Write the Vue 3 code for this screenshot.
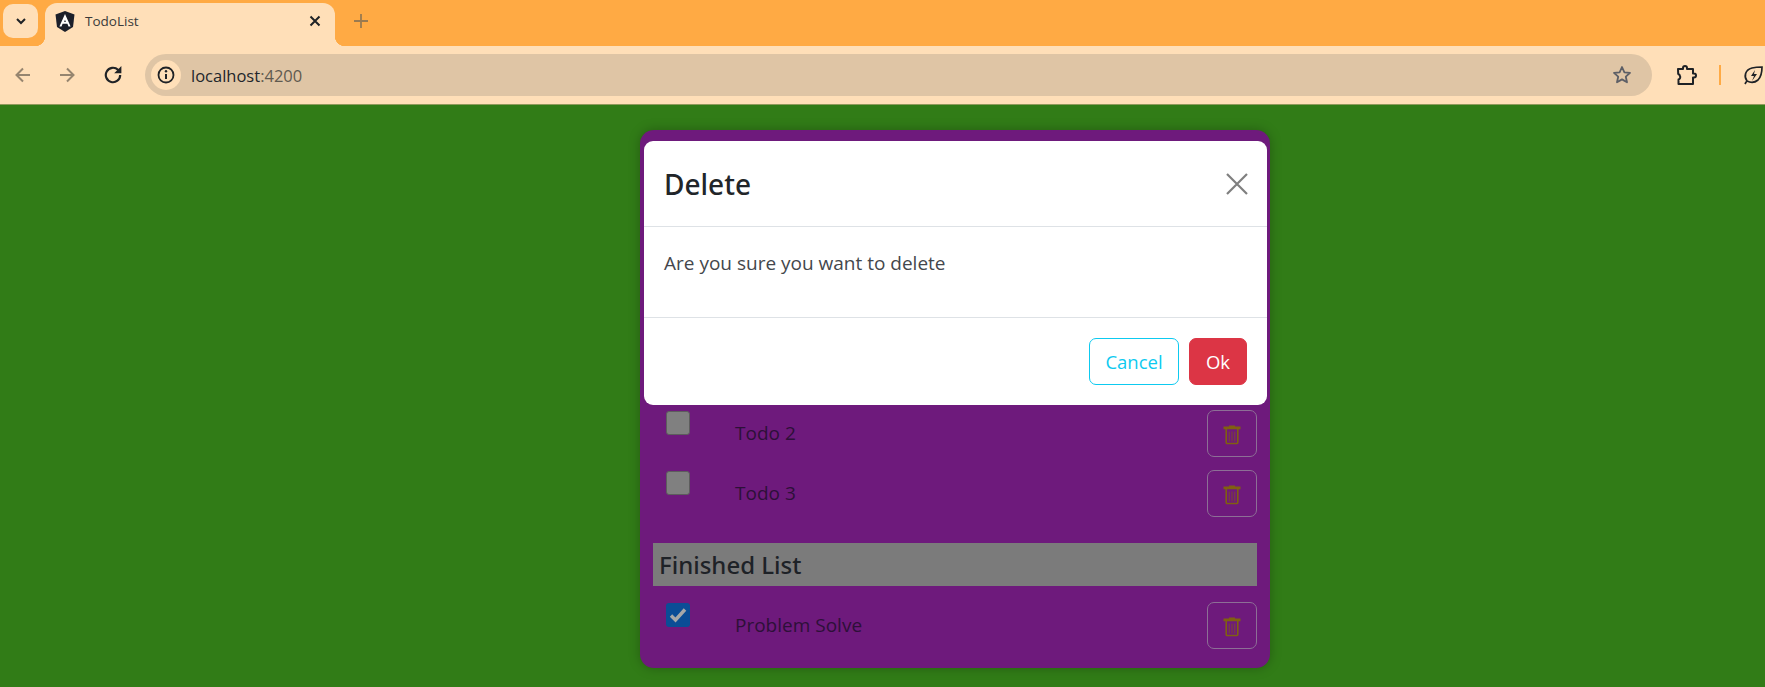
<template>
  <div class="page">
    <!-- 浏览器顶部 -->
    <header class="chrome">
      <div class="tabstrip">
        <button class="tab-search">
          <svg width="14" height="14" viewBox="0 0 14 14" fill="none"><path d="M3 5l4 4 4-4" stroke="#1f2226" stroke-width="2"/></svg>
        </button>
        <div class="tab">
          <svg class="favicon" width="20" height="21" viewBox="0 0 20 21">
            <path d="M10 0L0.500 3.400 2 16l8 5 8-5 1.500-12.600z" fill="#1b1f2a"/>
            <path d="M10 3L4.400 15.500h2.100l1.100-2.800h4.800l1.100 2.800h2.100zM9.100 11l.9-2.300.9 2.300z" fill="#fff" fill-rule="evenodd"/>
          </svg>
          <span class="tab-title">TodoList</span>
          <svg class="tab-close" width="12" height="12" viewBox="0 0 12 12"><path d="M1.500 1.500l9 9M10.500 1.500l-9 9" stroke="#1f2226" stroke-width="2"/></svg>
        </div>
        <svg class="new-tab" width="16" height="16" viewBox="0 0 16 16"><path d="M8 1v14M1 8h14" stroke="#9a7a50" stroke-width="1.800"/></svg>
      </div>
      <div class="toolbar">
        <svg class="nav" width="18" height="18" viewBox="0 0 18 18" fill="none"><path d="M16 9H3M9 2.500L2.500 9 9 15.500" stroke="#96856f" stroke-width="2"/></svg>
        <svg class="nav" width="18" height="18" viewBox="0 0 18 18" fill="none"><path d="M2 9h13M9 2.500L15.500 9 9 15.500" stroke="#96856f" stroke-width="2"/></svg>
        <svg class="nav" width="18" height="18" viewBox="1.500 1.500 15 15" fill="none"><path d="M15 9a6 6 0 1 1-1.800-4.300L15 6.500" stroke="#1f2226" stroke-width="1.800"/><path d="M16 1.500V7.500H10z" fill="#1f2226"/></svg>
        <div class="omnibox">
          <span class="site-info">
            <svg width="18" height="18" viewBox="0 0 18 18" fill="none"><circle cx="9" cy="9" r="7.500" stroke="#1f2226" stroke-width="1.800"/><path d="M9 8v5" stroke="#1f2226" stroke-width="2"/><circle cx="9" cy="5.300" r="1.200" fill="#1f2226"/></svg>
          </span>
          <span class="url">localhost<span class="port">:4200</span></span>
          <svg class="star" width="20" height="20" viewBox="0 0 20 20" fill="none"><path d="M10 2l2.400 5.300 5.600.6-4.200 3.800 1.200 5.600L10 14.400l-5 2.900 1.200-5.600L2 7.900l5.600-.6z" stroke="#5d5f66" stroke-width="1.800" stroke-linejoin="round"/></svg>
        </div>
        <svg class="ext" width="21" height="21" viewBox="0 0 21 21" fill="none"><path d="M2 4h5V3a2 2 0 0 1 4 0v1h6v4.500h1a2 2 0 0 1 0 4h-1V19H2.500v-4.500a2.500 2.500 0 0 0 1.500-3.500 2.500 2.500 0 0 0-1.800-2z" stroke="#1f2226" stroke-width="2" stroke-linejoin="round"/></svg>
        <span class="divider"></span>
        <svg class="leaf" width="22" height="21" viewBox="0 0 22 21" fill="none"><path d="M3 19c1-2 1.500-2.500 2-3C2 12 2.500 5 10 3c4-1 8-1 10-1 0 5-1 10-4 13-3 2.500-7 3-11 1" stroke="#1f2226" stroke-width="1.700"/><path d="M13 5l-4 6h3l-2 5 5-7h-3z" fill="#1f2226"/></svg>
      </div>
    </header>

    <!-- 页面内容 -->
    <main class="content">
      <section class="card">
        <div class="list pending">
          <div v-for="todo in pending" :key="todo" class="row">
            <span class="check"></span>
            <span class="label">{{ todo }}</span>
            <button class="trash">
              <svg width="18" height="20" viewBox="0 0 18 20" fill="none">
                <path d="M6 1.500V.5h6v1h5.500v2.800H.5V1.500z" fill="#806010"/>
                <path d="M3.200 4v13.500a1 1 0 0 0 1 1h9.600a1 1 0 0 0 1-1V4" stroke="#806010" stroke-width="1.600"/>
                <path d="M6.200 6.500v10M9 6.500v10M11.800 6.500v10" stroke="#806010" stroke-opacity=".7"/>
              </svg>
            </button>
          </div>
        </div>
        <h2 class="band">Finished List</h2>
        <div class="list">
          <div v-for="todo in finished" :key="todo" class="row">
            <span class="check done">
              <svg width="18" height="16" viewBox="0 0 18 16" fill="none"><path d="M2 8.500l4.500 4.500L16 2.500" stroke="#a8a8a8" stroke-width="3.400"/></svg>
            </span>
            <span class="label">{{ todo }}</span>
            <button class="trash">
              <svg width="18" height="20" viewBox="0 0 18 20" fill="none">
                <path d="M6 1.500V.5h6v1h5.500v2.800H.5V1.500z" fill="#806010"/>
                <path d="M3.200 4v13.500a1 1 0 0 0 1 1h9.600a1 1 0 0 0 1-1V4" stroke="#806010" stroke-width="1.600"/>
                <path d="M6.200 6.500v10M9 6.500v10M11.800 6.500v10" stroke="#806010" stroke-opacity=".7"/>
              </svg>
            </button>
          </div>
        </div>

        <!-- 删除确认弹窗 -->
        <div class="modal">
          <div class="modal-header">
            <h1>Delete</h1>
            <svg width="22" height="22" viewBox="0 0 22 22" fill="none"><path d="M1 1l20 20M21 1L1 21" stroke="#7f7f7f" stroke-width="2.200"/></svg>
          </div>
          <div class="modal-body">Are you sure you want to delete</div>
          <div class="modal-footer">
            <button class="btn cancel">Cancel</button>
            <button class="btn ok">Ok</button>
          </div>
        </div>
      </section>
    </main>
  </div>
</template>

<script setup>
const pending = ['Todo 2', 'Todo 3']
const finished = ['Problem Solve']
</script>

<style>
html, body {
  margin: 0;
  overflow: hidden;
}
</style>

<style scoped>
.page {
  width: 1765px;
  height: 687px;
  overflow: hidden;
  display: flex;
  flex-direction: column;
  font-family: "Open Sans", "Noto Sans", sans-serif;
  background: #317c17;
}

.chrome {
  flex: none;
  height: 105px;
  background: #ffdfb8;
  border-bottom: 1px solid #8f9a5c;
  box-sizing: border-box;
}

.tabstrip {
  height: 46px;
  display: flex;
  align-items: flex-start;
  background: #ffaa44;
}

.tab-search {
  width: 35px;
  height: 34px;
  margin: 4px 0 0 3px;
  padding: 0;
  border: none;
  border-radius: 10px;
  background: #ffdfb8;
  display: flex;
  align-items: center;
  justify-content: center;
}

.tab {
  position: relative;
  width: 290px;
  height: 43px;
  margin: 3px 0 0 7px;
  padding: 0 14px 7px 10px;
  box-sizing: border-box;
  display: flex;
  align-items: center;
  background: #ffdfb8;
  border-radius: 12px 12px 0 0;
}

/* 标签页底部的内凹圆角 */
.tab::before,
.tab::after {
  content: "";
  position: absolute;
  bottom: 0;
  width: 10px;
  height: 10px;
}

.tab::before {
  left: -10px;
  background: radial-gradient(circle at 0 0, #ffaa44 10px, #ffdfb8 10.500px);
}

.tab::after {
  right: -10px;
  background: radial-gradient(circle at 100% 0, #ffaa44 10px, #ffdfb8 10.500px);
}

.tab-title {
  flex: 1;
  margin-left: 10px;
  font-size: 13.500px;
  color: #3a3a3a;
}

.new-tab {
  margin: 13px 0 0 18px;
}

.toolbar {
  height: 58px;
  display: flex;
  align-items: center;
  padding-left: 14px;
}

.nav {
  flex: none;
  margin-right: 28px;
}

.nav:nth-of-type(1) {
  margin-right: 26px;
}

.nav:nth-of-type(3) {
  margin-right: 23px;
}

.omnibox {
  flex: none;
  width: 1507px;
  height: 42px;
  padding: 0 20px 0 6px;
  box-sizing: border-box;
  display: flex;
  align-items: center;
  background: #dfc5a5;
  border-radius: 21px;
}

.site-info {
  width: 30px;
  height: 30px;
  border-radius: 50%;
  background: #ffdfb8;
  display: flex;
  align-items: center;
  justify-content: center;
}

.url {
  flex: 1;
  margin-left: 10px;
  font-size: 16.500px;
  color: #22262b;
}

.port {
  color: #5f5a50;
}

.ext {
  flex: none;
  margin-left: 24px;
}

.divider {
  flex: none;
  width: 2px;
  height: 20px;
  margin-left: 22px;
  background: #ffaa44;
}

.leaf {
  flex: none;
  margin-left: 21px;
}

.content {
  flex: 1;
  padding: 25px 0 0 640px;
}

.card {
  position: relative;
  width: 630px;
  height: 538px;
  padding: 280px 13px 0;
  box-sizing: border-box;
  background: #6e1a7c;
  border-radius: 14px;
  box-shadow: 0 0 12px rgba(0, 0, 0, 0.25);
}

.list {
  display: flex;
  flex-direction: column;
  gap: 13px;
}

.pending {
  margin-bottom: 26px;
}

.row {
  height: 47px;
  display: flex;
  align-items: center;
}

.check {
  flex: none;
  align-self: flex-start;
  width: 24px;
  height: 24px;
  margin: 1px 0 0 13px;
  box-sizing: border-box;
  border: 1px solid #5d5d5d;
  border-radius: 3px;
  background: #808080;
  display: flex;
  align-items: center;
  justify-content: center;
}

.check.done {
  border: none;
  background: #0b4d96;
}

.label {
  flex: 1;
  margin: -2px 0 0 45px;
  font-size: 19px;
  color: #2d1038;
}

.trash {
  flex: none;
  width: 50px;
  height: 47px;
  padding: 2px 0 0;
  border: 1px solid #8d6f96;
  border-radius: 7px;
  background: none;
  display: flex;
  align-items: center;
  justify-content: center;
}

.band {
  height: 43px;
  margin: 0 0 16px;
  padding-left: 6px;
  background: #7b7b7b;
  font-family: "Noto Sans", sans-serif;
  font-size: 24px;
  font-weight: 500;
  line-height: 43px;
  color: #1e2227;
}

.modal {
  position: absolute;
  top: 11px;
  left: 4px;
  width: 623px;
  height: 264px;
  display: flex;
  flex-direction: column;
  background: #fff;
  border-radius: 9px;
}

.modal-header {
  height: 86px;
  padding: 0 19px 0 20px;
  box-sizing: border-box;
  display: flex;
  align-items: center;
  justify-content: space-between;
  border-bottom: 1px solid #dee2e6;
}

.modal-header h1 {
  margin: 0;
  font-family: "Noto Sans", sans-serif;
  font-size: 28px;
  font-weight: 500;
  color: #212529;
}

.modal-body {
  height: 91px;
  padding: 23px 20px 0;
  box-sizing: border-box;
  border-bottom: 1px solid #dee2e6;
  font-size: 19px;
  color: #44474c;
}

.modal-footer {
  flex: 1;
  padding: 20px 20px 0;
  display: flex;
  justify-content: flex-end;
  gap: 10px;
}

.btn {
  height: 47px;
  padding: 0;
  border-radius: 7px;
  font-family: inherit;
  font-size: 18.500px;
}

.cancel {
  width: 90px;
  border: 1px solid #0dcaf0;
  background: #fff;
  color: #0dcaf0;
}

.ok {
  width: 58px;
  border: 1px solid #dc3545;
  background: #dc3545;
  color: #fff;
}
</style>
